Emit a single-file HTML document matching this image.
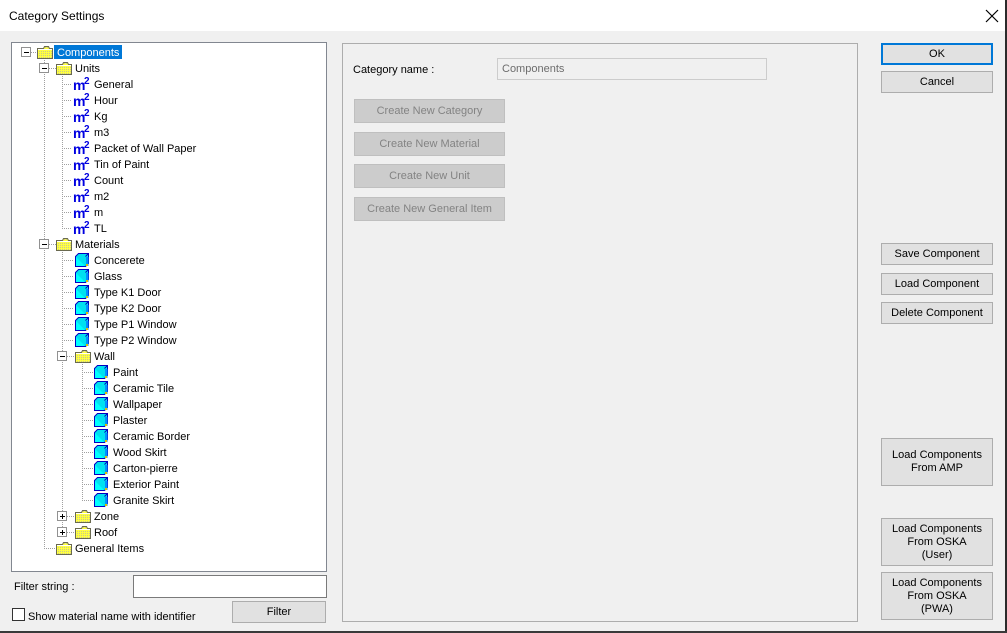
<!DOCTYPE html>
<html><head><meta charset="utf-8"><style>
*{margin:0;padding:0;box-sizing:border-box}
body{width:1007px;height:633px;background:#f0f0f0;font-family:"Liberation Sans",sans-serif;font-size:11px;color:#000;position:relative;overflow:hidden}
.a{position:absolute}
.title{left:0;top:0;width:1005px;height:31px;background:#fff}
.btn{position:absolute;background:#e1e1e1;border:1px solid #adadad;text-align:center;font-size:11px;display:flex;align-items:center;justify-content:center;line-height:13px}
.dis{background:#cccccc;border:1px solid #bfbfbf;color:#838383}
</style></head><body>
<div class="a title"></div>
<div class="a" style="left:9px;top:9px;font-size:12px">Category Settings</div>
<svg class="a" style="left:985px;top:9px" width="14" height="14"><path d="M1 1L13 13M13 1L1 13" stroke="#000" stroke-width="1.2"/></svg>
<div class="a" style="left:1005px;top:0;width:2px;height:633px;background:#2b2b2b"></div>
<div class="a" style="left:0;top:631px;width:1007px;height:2px;background:#3a3a3a"></div>

<svg class="a" style="left:0;top:0" width="1007" height="633" font-family="Liberation Sans, sans-serif" font-size="11">
<defs>
<pattern id="ck" width="2" height="2" patternUnits="userSpaceOnUse"><rect width="2" height="2" fill="#ffff40"/><rect width="1" height="1" fill="#c8c890"/></pattern>
<g id="fold"><path d="M0.5 3.5h6l1-2h4l1 2h3v10h-15z" fill="url(#ck)" stroke="#6a6a50"/><rect x="1" y="4" width="14" height="1" fill="#fff"/></g>
<g id="cube"><rect x="0.5" y="3.5" width="10" height="10" fill="#00ffff" stroke="#0000c0"/><path d="M0.5 3.5l3-3h10v10l-3 3M10.5 3.5l3-3" fill="#00e0f0" stroke="#0000c0"/><path d="M11 4h2.5v9l-2.5 0z" fill="#0090ff"/><rect x="11" y="11" width="2" height="2" fill="#e0c000"/></g>
<g id="minus"><rect x="-4.5" y="-4.5" width="9" height="9" fill="#fff" stroke="#919191"/><path d="M-2 0.5h5" stroke="#000"/></g>
<g id="plus"><rect x="-4.5" y="-4.5" width="9" height="9" fill="#fff" stroke="#919191"/><path d="M-2 0.5h5M0.5 -2v5" stroke="#000"/></g>
</defs>
<rect x="11.5" y="42.5" width="315" height="529" fill="#fff" stroke="#828790"/>
<g stroke="#a0a0a0" stroke-dasharray="1 1" fill="none">
<path d="M44.5 60v488M62.5 76v152M62.5 252v280M82.5 364v136"/>
<path d="M31 52.5h6M49 68.5h7M49 244.5h7M44 548.5h12"/>
<path d="M62 84.5h10M62 100.5h10M62 116.5h10M62 132.5h10M62 148.5h10M62 164.5h10M62 180.5h10M62 196.5h10M62 212.5h10M62 228.5h10"/>
<path d="M62 260.5h12M62 276.5h12M62 292.5h12M62 308.5h12M62 324.5h12M62 340.5h12M67 356.5h8M67 516.5h8M67 532.5h8"/>
<path d="M82 372.5h12M82 388.5h12M82 404.5h12M82 420.5h12M82 436.5h12M82 452.5h12M82 468.5h12M82 484.5h12M82 500.5h12"/>
</g>
<use href="#minus" x="26" y="52"/><use href="#minus" x="44" y="68"/><use href="#minus" x="44" y="244"/><use href="#minus" x="62" y="356"/>
<use href="#plus" x="62" y="516"/><use href="#plus" x="62" y="532"/>
<use href="#fold" x="37" y="45"/><use href="#fold" x="56" y="61"/><use href="#fold" x="56" y="237"/><use href="#fold" x="75" y="349"/><use href="#fold" x="75" y="509"/><use href="#fold" x="75" y="525"/><use href="#fold" x="56" y="541"/>
<rect x="54" y="45" width="68" height="14" fill="#0078d7"/>
<text x="57" y="56" fill="#fff">Components</text>
<text x="75" y="72">Units</text>
<g fill="#0000e0" font-weight="bold"><text x="73" y="90" font-size="14">m</text><text x="84" y="84" font-size="10">2</text>
<text x="73" y="106" font-size="14">m</text><text x="84" y="100" font-size="10">2</text>
<text x="73" y="122" font-size="14">m</text><text x="84" y="116" font-size="10">2</text>
<text x="73" y="138" font-size="14">m</text><text x="84" y="132" font-size="10">2</text>
<text x="73" y="154" font-size="14">m</text><text x="84" y="148" font-size="10">2</text>
<text x="73" y="170" font-size="14">m</text><text x="84" y="164" font-size="10">2</text>
<text x="73" y="186" font-size="14">m</text><text x="84" y="180" font-size="10">2</text>
<text x="73" y="202" font-size="14">m</text><text x="84" y="196" font-size="10">2</text>
<text x="73" y="218" font-size="14">m</text><text x="84" y="212" font-size="10">2</text>
<text x="73" y="234" font-size="14">m</text><text x="84" y="228" font-size="10">2</text></g>
<text x="94" y="88">General</text><text x="94" y="104">Hour</text><text x="94" y="120">Kg</text><text x="94" y="136">m3</text><text x="94" y="152">Packet of Wall Paper</text><text x="94" y="168">Tin of Paint</text><text x="94" y="184">Count</text><text x="94" y="200">m2</text><text x="94" y="216">m</text><text x="94" y="232">TL</text>
<text x="75" y="248">Materials</text>
<use href="#cube" x="75" y="253"/><use href="#cube" x="75" y="269"/><use href="#cube" x="75" y="285"/><use href="#cube" x="75" y="301"/><use href="#cube" x="75" y="317"/><use href="#cube" x="75" y="333"/>
<text x="94" y="264">Concerete</text><text x="94" y="280">Glass</text><text x="94" y="296">Type K1 Door</text><text x="94" y="312">Type K2 Door</text><text x="94" y="328">Type P1 Window</text><text x="94" y="344">Type P2 Window</text>
<text x="94" y="360">Wall</text>
<use href="#cube" x="94" y="365"/><use href="#cube" x="94" y="381"/><use href="#cube" x="94" y="397"/><use href="#cube" x="94" y="413"/><use href="#cube" x="94" y="429"/><use href="#cube" x="94" y="445"/><use href="#cube" x="94" y="461"/><use href="#cube" x="94" y="477"/><use href="#cube" x="94" y="493"/>
<text x="113" y="376">Paint</text><text x="113" y="392">Ceramic Tile</text><text x="113" y="408">Wallpaper</text><text x="113" y="424">Plaster</text><text x="113" y="440">Ceramic Border</text><text x="113" y="456">Wood Skirt</text><text x="113" y="472">Carton-pierre</text><text x="113" y="488">Exterior Paint</text><text x="113" y="504">Granite Skirt</text>
<text x="94" y="520">Zone</text><text x="94" y="536">Roof</text><text x="75" y="552">General Items</text>

<text x="14" y="590">Filter string :</text>
<rect x="133.5" y="575.5" width="193" height="22" fill="#fff" stroke="#7a7a7a"/>
<rect x="12.5" y="608.5" width="12" height="12" fill="#fff" stroke="#333"/>
<text x="28" y="620">Show material name with identifier</text>
<rect x="342.5" y="43.5" width="515" height="578" fill="none" stroke="#adadad"/>
<text x="353" y="73">Category name :</text>
<rect x="497.5" y="58.5" width="269" height="21" fill="#f0f0f0" stroke="#cccccc"/>
<text x="502" y="72" fill="#6d6d6d">Components</text>
</svg>
<div class="btn" style="left:232px;top:601px;width:94px;height:22px">Filter</div>
<div class="btn dis" style="left:354px;top:99px;width:151px;height:24px">Create New Category</div>
<div class="btn dis" style="left:354px;top:132px;width:151px;height:24px">Create New Material</div>
<div class="btn dis" style="left:354px;top:164px;width:151px;height:24px">Create New Unit</div>
<div class="btn dis" style="left:354px;top:197px;width:151px;height:24px">Create New General Item</div>
<div class="btn" style="left:881px;top:43px;width:112px;height:22px;border:2px solid #0078d7">OK</div>
<div class="btn" style="left:881px;top:71px;width:112px;height:22px">Cancel</div>
<div class="btn" style="left:881px;top:243px;width:112px;height:22px">Save Component</div>
<div class="btn" style="left:881px;top:273px;width:112px;height:22px">Load Component</div>
<div class="btn" style="left:881px;top:302px;width:112px;height:22px">Delete Component</div>
<div class="btn" style="left:881px;top:438px;width:112px;height:48px">Load Components<br>From AMP</div>
<div class="btn" style="left:881px;top:518px;width:112px;height:48px">Load Components<br>From OSKA<br>(User)</div>
<div class="btn" style="left:881px;top:572px;width:112px;height:48px">Load Components<br>From OSKA<br>(PWA)</div>
</body></html>
